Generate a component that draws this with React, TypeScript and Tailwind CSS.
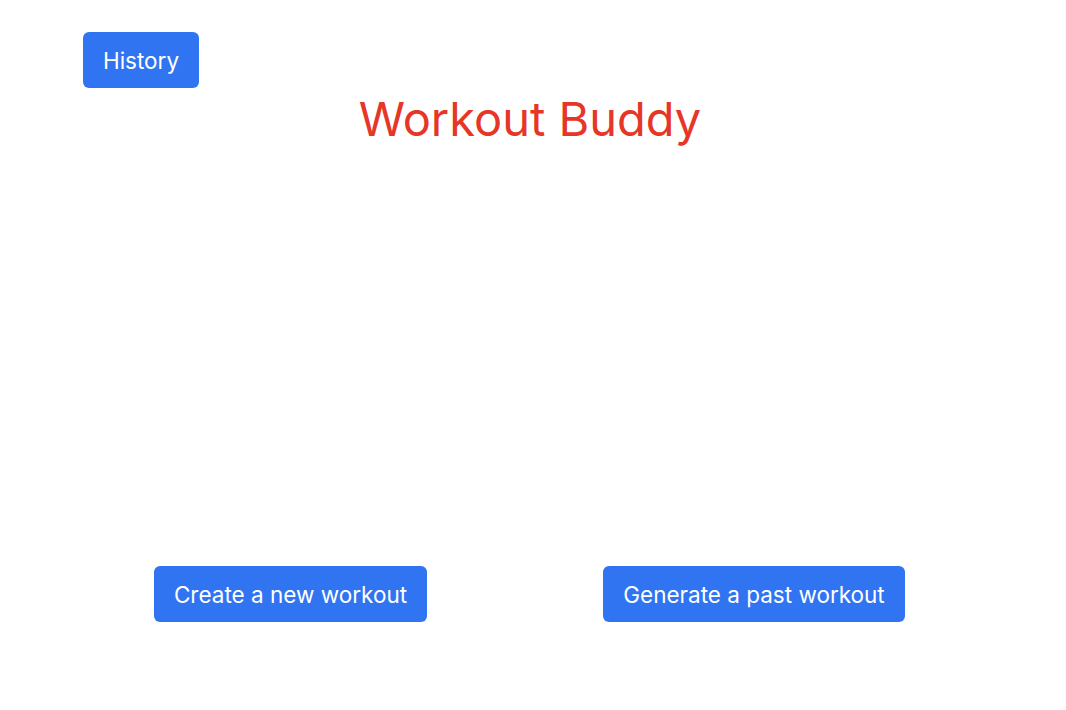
export default function App() {
  return (
    <div className="w-[1066px] h-[710px] bg-white flex flex-col font-['Inter','Noto_Sans',sans-serif]">
      <div className="pt-[32px] pl-[83px]">
        <button className="h-[56px] w-[116px] rounded-[6px] bg-[#3074f1] pt-[2px] text-white text-[22.5px] leading-none">
          History
        </button>
      </div>
      <h1 className="mt-[1px] text-center text-[47px] leading-[60px] text-[#e63628] pr-[6px]">Workout Buddy</h1>
      <div className="mt-[417px] flex pl-[154px] gap-[176px]">
        <button className="h-[56px] w-[273px] rounded-[6px] bg-[#3074f1] pt-[2px] text-white text-[22.5px] leading-none">
          Create a new workout
        </button>
        <button className="h-[56px] w-[302px] rounded-[6px] bg-[#3074f1] pt-[2px] text-white text-[22.5px] leading-none">
          Generate a past workout
        </button>
      </div>
    </div>
  );
}
